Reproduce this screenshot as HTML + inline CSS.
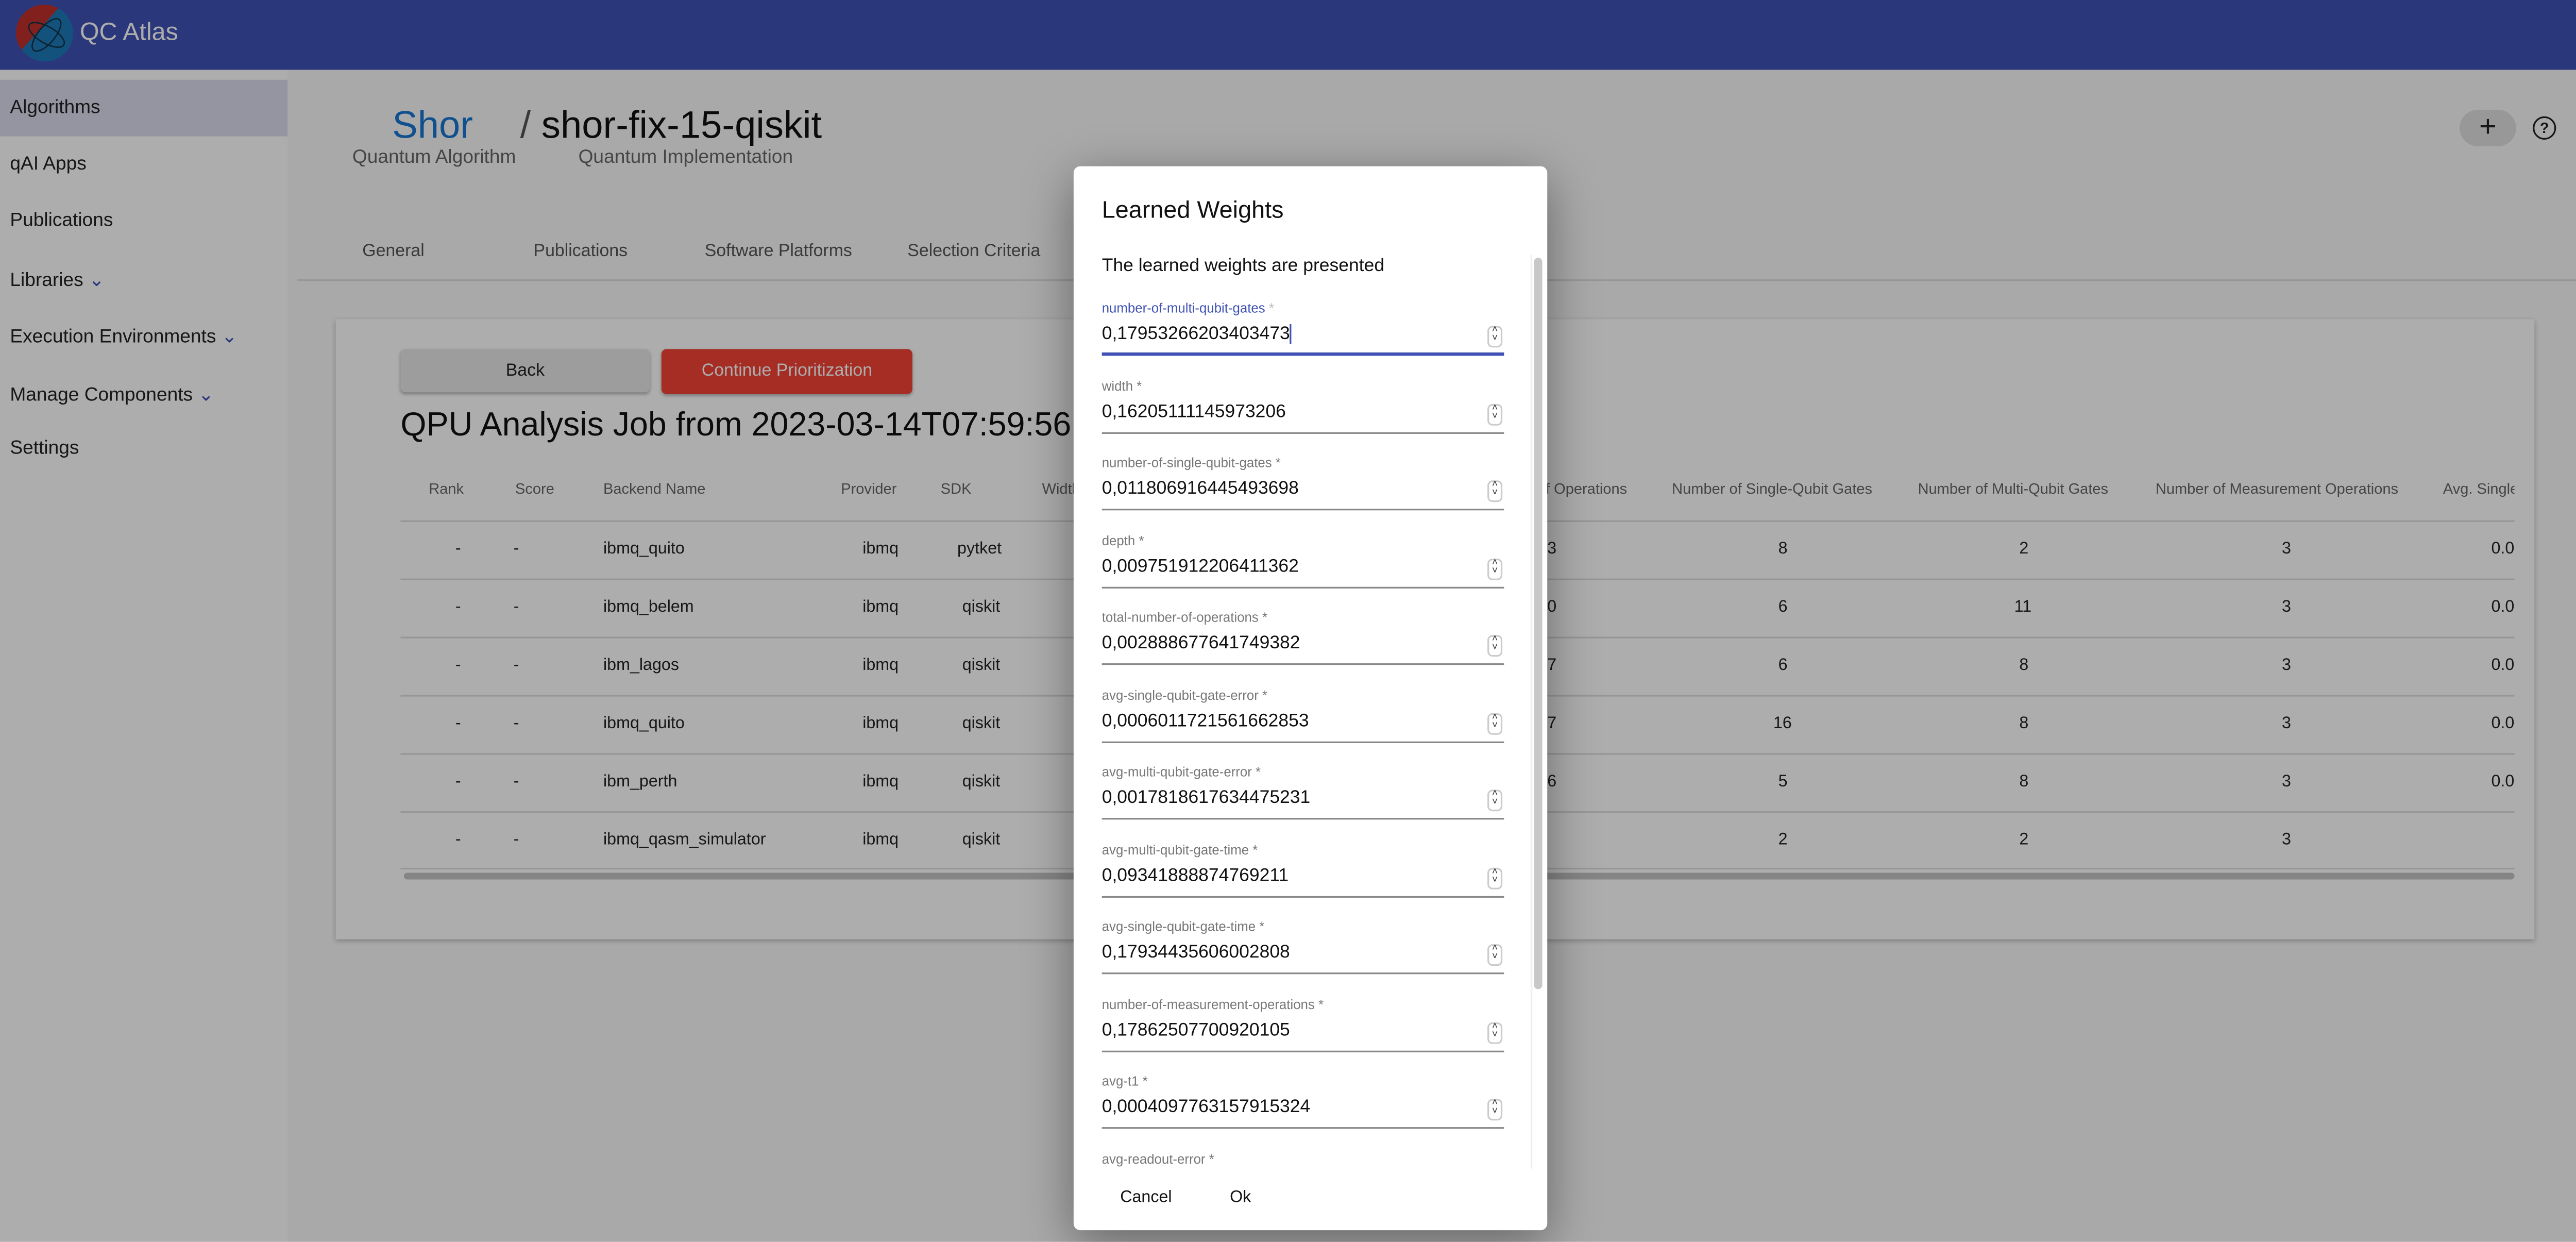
<!DOCTYPE html>
<html><head><meta charset="utf-8"><style>
html,body{margin:0;padding:0;overflow:hidden;width:5058px;height:2408px;background:#fafafa}
#w{position:absolute;left:0;top:0;width:1568px;height:747px;transform:scale(3.2258);transform-origin:0 0;font-family:"Liberation Sans",sans-serif;color:#222;background:#fafafa}
.a{position:absolute;white-space:nowrap}
.hd{left:0;top:0;width:1568px;height:42px;background:#3f51b5}
.sb{left:0;top:42px;width:173px;height:705px;background:#fff}
.nav{left:6px;font-size:11.5px;color:#222}
.card{left:202px;top:192px;width:1323px;height:373px;background:#fff;box-shadow:0 1px 3px rgba(0,0,0,.25)}
.th{font-size:9px;color:#666;top:289px}
.td{font-size:10px;color:#222}
.ln{left:241px;width:1272px;height:1px;background:#ddd}
.ov{left:0;top:0;width:1568px;height:747px;background:rgba(0,0,0,.32)}
.dlg{left:646px;top:100px;width:285px;height:640px;background:#fff;border-radius:4px;box-shadow:0 8px 30px rgba(0,0,0,.4)}
.lb{left:17px;font-size:8px;color:#777}
.vl{left:17px;font-size:11px;color:#111}
.ul{left:17px;width:242px;height:1px;background:#888}
.sp{left:249px;width:7px;height:11px;border:1px solid #ccc;border-radius:3px;font-size:6px;line-height:5px;text-align:center;color:#333}
</style></head><body><div id="w">
<div class="a hd"></div>
<svg class="a" style="left:9px;top:2px" width="36" height="36" viewBox="0 0 36 36"><circle cx="18" cy="18" r="17" fill="#1d7ab8"/><path d="M4 28 A17 17 0 0 1 26 3 Z" fill="#c0302c"/><ellipse cx="19" cy="19" rx="12" ry="5" fill="none" stroke="#134" stroke-width=".8" transform="rotate(-50 19 19)"/><ellipse cx="19" cy="19" rx="12" ry="5" fill="none" stroke="#134" stroke-width=".8" transform="rotate(30 19 19)"/></svg>
<div class="a" style="left:48px;top:11px;font-size:15px;color:#fff">QC Atlas</div>
<svg class="a" style="left:1549px;top:13px" width="13" height="13" viewBox="0 0 24 24"><path fill="#fff" d="M3 5v14a2 2 0 0 0 2 2h14a2 2 0 0 0 2-2V5a2 2 0 0 0-2-2H5a2 2 0 0 0-2 2zm12 4a3 3 0 1 1-6 0 3 3 0 0 1 6 0zm-9 8c0-2 4-3.1 6-3.1s6 1.1 6 3.1v1H6v-1z"/></svg>
<div class="a sb"></div>
<div class="a" style="left:0;top:48px;width:173px;height:34px;background:#dadcec"></div>
<div class="a nav" style="top:59px">Algorithms</div>
<div class="a nav" style="top:93px">qAI Apps</div>
<div class="a nav" style="top:127px">Publications</div>
<div class="a nav" style="top:161px">Libraries <span style="color:#3f51b5">&#8964;</span></div>
<div class="a nav" style="top:195px">Execution Environments <span style="color:#3f51b5">&#8964;</span></div>
<div class="a nav" style="top:230px">Manage Components <span style="color:#3f51b5">&#8964;</span></div>
<div class="a nav" style="top:264px">Settings</div>
<div class="a" style="left:236px;top:62px;font-size:23px;color:#1976d2">Shor</div>
<div class="a" style="left:313px;top:62px;font-size:23px;color:#111"><span style="color:#555">/</span> shor-fix-15-qiskit</div>
<div class="a" style="left:212px;top:89px;font-size:11.5px;color:#666">Quantum Algorithm</div>
<div class="a" style="left:348px;top:89px;font-size:11.5px;color:#666">Quantum Implementation</div>
<div class="a" style="left:1480px;top:66px;width:34px;height:22px;border-radius:11px;background:#e0e0e0;text-align:center;font-size:18px;line-height:21px">+</div>
<div class="a" style="left:1524px;top:70px;width:12px;height:12px;border:1.5px solid #222;border-radius:50%;font-size:9px;line-height:12px;text-align:center;font-weight:bold">?</div>
<div class="a" style="left:218px;top:145px;font-size:10.5px;color:#555">General</div>
<div class="a" style="left:321px;top:145px;font-size:10.5px;color:#555">Publications</div>
<div class="a" style="left:424px;top:145px;font-size:10.5px;color:#555">Software Platforms</div>
<div class="a" style="left:546px;top:145px;font-size:10.5px;color:#555">Selection Criteria</div>
<div class="a" style="left:179px;top:168px;width:1389px;height:1px;background:#ddd"></div>
<div class="a card"></div>
<div class="a" style="left:241px;top:210px;width:150px;height:26px;background:#e8e8e8;border-radius:3px;box-shadow:0 1px 2px rgba(0,0,0,.3);text-align:center;line-height:26px;font-size:10.5px">Back</div>
<div class="a" style="left:398px;top:210px;width:151px;height:27px;background:#f44336;border-radius:3px;box-shadow:0 1px 2px rgba(0,0,0,.3);text-align:center;line-height:27px;font-size:10.5px;color:#fff">Continue Prioritization</div>
<div class="a" style="left:241px;top:245px;font-size:20px;color:#111">QPU Analysis Job from 2023-03-14T07:59:56.4</div>
<div class="a th" style="left:258px">Rank</div><div class="a th" style="left:310px">Score</div><div class="a th" style="left:363px">Backend Name</div><div class="a th" style="left:506px">Provider</div><div class="a th" style="left:566px">SDK</div><div class="a th" style="left:627px">Width</div>
<div class="a th" style="left:925px">of Operations</div><div class="a th" style="left:1006px">Number of Single-Qubit Gates</div><div class="a th" style="left:1154px">Number of Multi-Qubit Gates</div><div class="a th" style="left:1297px">Number of Measurement Operations</div><div class="a th" style="left:1470px;width:43px;overflow:hidden">Avg. Single</div>
<div class="a ln" style="top:313px"></div><div class="a ln" style="top:348px"></div><div class="a ln" style="top:383px"></div><div class="a ln" style="top:418px"></div><div class="a ln" style="top:453px"></div><div class="a ln" style="top:488px"></div><div class="a ln" style="top:522px"></div>
<div class="a" style="left:243px;top:525px;width:1270px;height:4px;border-radius:2px;background:#c4c4c4"></div>
<div class="a td" style="left:274px;top:325px">-</div><div class="a td" style="left:309px;top:325px">-</div><div class="a td" style="left:363px;top:325px">ibmq_quito</div><div class="a td" style="left:519px;top:325px">ibmq</div><div class="a td" style="left:576px;top:325px">pytket</div>
<div class="a td" style="left:274px;top:360px">-</div><div class="a td" style="left:309px;top:360px">-</div><div class="a td" style="left:363px;top:360px">ibmq_belem</div><div class="a td" style="left:519px;top:360px">ibmq</div><div class="a td" style="left:579px;top:360px">qiskit</div>
<div class="a td" style="left:274px;top:395px">-</div><div class="a td" style="left:309px;top:395px">-</div><div class="a td" style="left:363px;top:395px">ibm_lagos</div><div class="a td" style="left:519px;top:395px">ibmq</div><div class="a td" style="left:579px;top:395px">qiskit</div>
<div class="a td" style="left:274px;top:430px">-</div><div class="a td" style="left:309px;top:430px">-</div><div class="a td" style="left:363px;top:430px">ibmq_quito</div><div class="a td" style="left:519px;top:430px">ibmq</div><div class="a td" style="left:579px;top:430px">qiskit</div>
<div class="a td" style="left:274px;top:465px">-</div><div class="a td" style="left:309px;top:465px">-</div><div class="a td" style="left:363px;top:465px">ibm_perth</div><div class="a td" style="left:519px;top:465px">ibmq</div><div class="a td" style="left:579px;top:465px">qiskit</div>
<div class="a td" style="left:274px;top:500px">-</div><div class="a td" style="left:309px;top:500px">-</div><div class="a td" style="left:363px;top:500px">ibmq_qasm_simulator</div><div class="a td" style="left:519px;top:500px">ibmq</div><div class="a td" style="left:579px;top:500px">qiskit</div>
<div class="a td" style="left:931px;top:325px">3</div><div class="a td" style="left:1070px;top:325px">8</div><div class="a td" style="left:1215px;top:325px">2</div><div class="a td" style="left:1373px;top:325px">3</div><div class="a td" style="left:1499px;top:325px;width:14px;overflow:hidden">0.0</div>
<div class="a td" style="left:931px;top:360px">0</div><div class="a td" style="left:1070px;top:360px">6</div><div class="a td" style="left:1212px;top:360px">11</div><div class="a td" style="left:1373px;top:360px">3</div><div class="a td" style="left:1499px;top:360px;width:14px;overflow:hidden">0.0</div>
<div class="a td" style="left:931px;top:395px">7</div><div class="a td" style="left:1070px;top:395px">6</div><div class="a td" style="left:1215px;top:395px">8</div><div class="a td" style="left:1373px;top:395px">3</div><div class="a td" style="left:1499px;top:395px;width:14px;overflow:hidden">0.0</div>
<div class="a td" style="left:931px;top:430px">7</div><div class="a td" style="left:1067px;top:430px">16</div><div class="a td" style="left:1215px;top:430px">8</div><div class="a td" style="left:1373px;top:430px">3</div><div class="a td" style="left:1499px;top:430px;width:14px;overflow:hidden">0.0</div>
<div class="a td" style="left:931px;top:465px">6</div><div class="a td" style="left:1070px;top:465px">5</div><div class="a td" style="left:1215px;top:465px">8</div><div class="a td" style="left:1373px;top:465px">3</div><div class="a td" style="left:1499px;top:465px;width:14px;overflow:hidden">0.0</div>
<div class="a td" style="left:1070px;top:500px">2</div><div class="a td" style="left:1215px;top:500px">2</div><div class="a td" style="left:1373px;top:500px">3</div>
<div class="a ov"></div>
<div class="a dlg">
<div class="a" style="left:17px;top:19px;font-size:14.5px;color:#111">Learned Weights</div>
<div class="a" style="left:0;top:53px;width:285px;height:550px;overflow:hidden">
<div class="a" style="left:277px;top:2px;width:5px;height:440px;border-radius:3px;background:#c8c8c8"></div>
<div class="a" style="left:275px;top:0;width:1px;height:550px;background:#eee"></div>
<div class="a" style="left:17px;top:1px;font-size:11px;color:#111">The learned weights are presented</div>
<div class="a lb" style="top:28px;color:#3f51b5">number-of-multi-qubit-gates <span style="color:#bbb">*</span></div>
<div class="a vl" style="top:42px">0,17953266203403473<span style="border-left:1px solid #3f51b5"></span></div>
<div class="a sp" style="top:43px">&#708;<br>&#709;</div>
<div class="a ul" style="top:59px;height:2px;background:#3f51b5"></div>
<div id="fl"></div>
</div>
<div class="a" style="left:28px;top:615px;font-size:10px;color:#111">Cancel</div>
<div class="a" style="left:94px;top:615px;font-size:10px;color:#111">Ok</div>
</div>
</div>
<script>
var f=[["width *","0,16205111145973206"],["number-of-single-qubit-gates *","0,011806916445493698"],["depth *","0,009751912206411362"],["total-number-of-operations *","0,002888677641749382"],["avg-single-qubit-gate-error *","0,0006011721561662853"],["avg-multi-qubit-gate-error *","0,0017818617634475231"],["avg-multi-qubit-gate-time *","0,09341888874769211"],["avg-single-qubit-gate-time *","0,17934435606002808"],["number-of-measurement-operations *","0,17862507700920105"],["avg-t1 *","0,0004097763157915324"],["avg-readout-error *",""]];
var h="";f.forEach(function(x,i){var t=28+46.5*(i+1);h+='<div class="a lb" style="top:'+t+'px">'+x[0]+'</div>';if(x[1]){h+='<div class="a vl" style="top:'+(t+14)+'px">'+x[1]+'</div><div class="a sp" style="top:'+(t+15)+'px">&#708;<br>&#709;</div><div class="a ul" style="top:'+(t+32)+'px"></div>';}});
document.getElementById("fl").outerHTML=h;
</script>
</body></html>
